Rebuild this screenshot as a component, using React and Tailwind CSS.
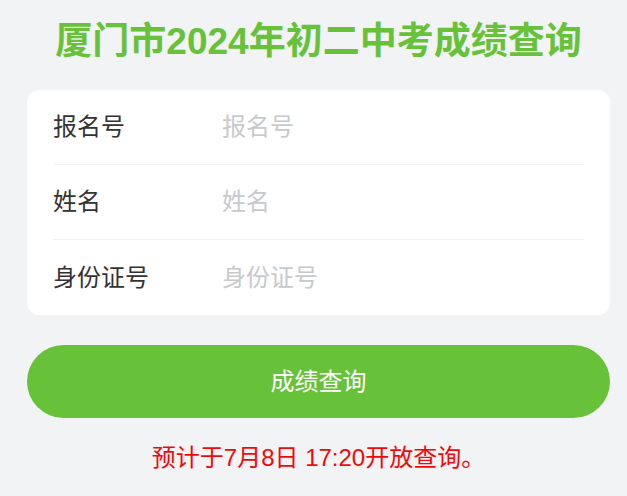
import React from 'react';

export default function App() {
  const campos = [
    { label: '报名号', placeholder: '报名号' },
    { label: '姓名', placeholder: '姓名' },
    { label: '身份证号', placeholder: '身份证号' },
  ];

  return (
    <div className="min-h-[496px] bg-[#f2f3f5] pl-[27px] pr-[17px] font-['Liberation_Sans','Noto_Sans_CJK_SC',sans-serif]">
      <h1 className="pt-[17px] h-[90px] text-center text-[37px] leading-[50px] font-bold text-[#67c23a]">
        厦门市2024年初二中考成绩查询
      </h1>

      <div className="bg-white rounded-xl">
        {campos.map((c, i) => (
          <div key={c.label} className="px-[26px]">
            <div className={`flex items-center h-[75px] ${i < campos.length - 1 ? 'border-b border-[#f2f2f2]' : ''}`}>
              <label className="w-[169px] text-[24px] text-[#333]">{c.label}</label>
              <input
                placeholder={c.placeholder}
                className="flex-1 min-w-0 text-[24px] outline-none placeholder:text-[#c8c9cc] bg-transparent"
              />
            </div>
          </div>
        ))}
      </div>

      <button className="mt-[30px] w-full h-[73px] rounded-full bg-[#67c23a] text-white text-[24px]">
        成绩查询
      </button>

      <p className="mt-[22px] text-center text-[24px] text-[#ee0a0a]">
        预计于7月8日 17:20开放查询。
      </p>
    </div>
  );
}
